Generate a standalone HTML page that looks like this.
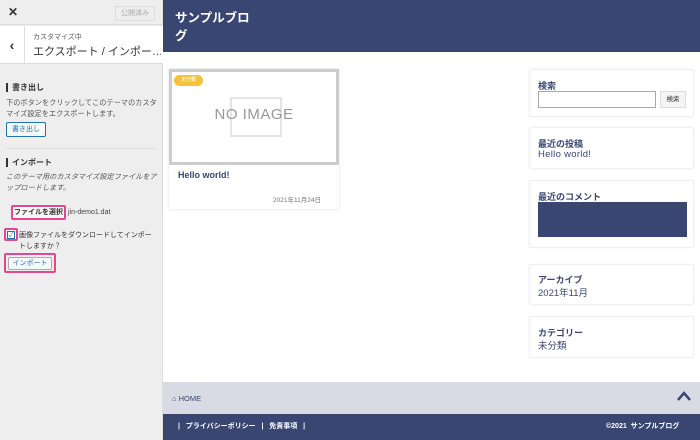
<!DOCTYPE html>
<html><head><meta charset="utf-8"><style>
*{box-sizing:border-box;margin:0;padding:0}
body{width:700px;height:440px;overflow:hidden;position:relative;font-family:"Liberation Sans","Noto Sans CJK JP",sans-serif;background:#fff;color:#333}
.a{position:absolute}
.side{left:0;top:0;width:163px;height:440px;background:#eeeeee;border-right:1px solid #ddd}
.wg{background:#fff;border:1px solid #f0f0f0;border-radius:2px;box-shadow:0 0 2px rgba(0,0,0,.05);left:529px;width:165px}
.wt{font-size:9px;font-weight:bold;color:#3a4672;position:absolute;left:8px;white-space:nowrap}
.pk{border:2px solid #e0488f;border-radius:2px}
</style></head><body>
<div class="a side">
 <div class="a" style="left:0;top:0;width:163px;height:25px;border-bottom:1px solid #ddd"></div>
 <div class="a" style="left:8px;top:5px;font-size:12px;font-weight:bold">✕</div>
 <div class="a" style="left:115px;top:6px;width:40px;height:15px;border:1px solid #ddd;font-size:7px;color:#aaa;text-align:center;line-height:13px">公開済み</div>
 <div class="a" style="left:0;top:26px;width:163px;height:38px;background:#fff;border-bottom:1px solid #ddd"></div>
 <div class="a" style="left:0;top:26px;width:25px;height:38px;border-right:1px solid #ddd;font-size:14px;font-weight:bold;text-align:center;line-height:38px">‹</div>
 <div class="a" style="left:33px;top:32px;font-size:7px;color:#555">カスタマイズ中</div>
 <div class="a" style="left:33px;top:43px;font-size:11px;color:#333;white-space:nowrap;width:128px;overflow:hidden">エクスポート / インポー…</div>
 <div class="a" style="left:6px;top:83px;border-left:2px solid #333;padding-left:4px;font-size:8px;font-weight:bold;line-height:9px">書き出し</div>
 <div class="a" style="left:6px;top:97px;font-size:7.2px;color:#555;line-height:11px;width:152px">下のボタンをクリックしてこのテーマのカスタマイズ設定をエクスポートします。</div>
 <div class="a" style="left:6px;top:122px;width:40px;height:15px;border:1px solid #2271b1;border-radius:2px;background:#f6f7f7;font-size:7px;color:#2271b1;text-align:center;line-height:13px">書き出し</div>
 <div class="a" style="left:6px;top:148px;width:150px;border-top:1px solid #ddd"></div>
 <div class="a" style="left:6px;top:158px;border-left:2px solid #333;padding-left:4px;font-size:8px;font-weight:bold;line-height:9px">インポート</div>
 <div class="a" style="left:6px;top:171px;font-size:7.2px;color:#555;line-height:11px;width:152px;font-style:italic">このテーマ用のカスタマイズ設定ファイルをアップロードします。</div>
 <div class="a pk" style="left:11px;top:205px;width:55px;height:15px;background:#f6f6f6;font-size:7px;font-weight:bold;text-align:center;line-height:11px">ファイルを選択</div>
 <div class="a" style="left:68px;top:209px;font-size:7px;color:#444">jin-demo1.dat</div>
 <div class="a pk" style="left:4px;top:228px;width:14px;height:13px;background:#fff"><div style="margin:1px;width:8px;height:8px;border:1px solid #2271b1;font-size:7px;line-height:7px;color:#2271b1;text-align:center">✓</div></div>
 <div class="a" style="left:19px;top:230px;font-size:7px;color:#333;width:138px;line-height:11px">画像ファイルをダウンロードしてインポートしますか？</div>
 <div class="a pk" style="left:4px;top:253px;width:52px;height:20px;padding:2px"><div style="width:44px;height:13px;border:1px solid #aaa;border-radius:2px;background:#f6f7f7;font-size:7px;color:#2271b1;text-align:center;line-height:11px">インポート</div></div>
</div>
<div class="a" style="left:163px;top:0;width:537px;height:52px;background:#3a4672"></div>
<div class="a" style="left:175px;top:9px;font-size:12.5px;font-weight:bold;color:#fff;line-height:18px;width:80px">サンプルブログ</div>
<div class="a" style="left:169px;top:69px;width:170px;height:140px;background:#fff;box-shadow:0 0 3px rgba(0,0,0,.12)"></div>
<div class="a" style="left:169px;top:69px;width:170px;height:96px;border:3px solid #ccc;background:#fff"></div>
<div class="a" style="left:230px;top:97px;width:52px;height:40px;border:2px solid #e4e4e4"></div>
<div class="a" style="left:169px;top:106px;width:170px;text-align:center;font-size:15px;color:#999;letter-spacing:0.5px">NO IMAGE</div>
<div class="a" style="left:174px;top:75px;width:29px;height:11px;border-radius:6px;background:#f5c33b;font-size:5px;color:#fff;text-align:center;line-height:11px">未分類</div>
<div class="a" style="left:178px;top:170px;font-size:9px;font-weight:bold;color:#3a4672">Hello world!</div>
<div class="a" style="left:273px;top:194px;font-size:6.5px;color:#777">2021年11月24日</div>
<div class="a wg" style="top:69px;height:48px"><div class="wt" style="top:9px">検索</div>
 <div class="a" style="left:8px;top:21px;width:118px;height:17px;border:1px solid #aaa"></div>
 <div class="a" style="left:130px;top:21px;width:26px;height:17px;border:1px solid #ddd;background:#f5f5f5;font-size:6.5px;text-align:center;line-height:15px">検索</div></div>
<div class="a wg" style="top:127px;height:42px"><div class="wt" style="top:9px">最近の投稿</div><div class="wt" style="top:21px;font-size:9.5px;font-weight:normal;letter-spacing:.3px">Hello world!</div></div>
<div class="a wg" style="top:180px;height:68px"><div class="wt" style="top:9px">最近のコメント</div><div class="a" style="left:8px;top:21px;width:149px;height:35px;background:#3a4672"></div></div>
<div class="a wg" style="top:264px;height:41px"><div class="wt" style="top:8px">アーカイブ</div><div class="wt" style="top:20px;font-size:9.5px;font-weight:normal">2021年11月</div></div>
<div class="a wg" style="top:316px;height:42px"><div class="wt" style="top:9px">カテゴリー</div><div class="wt" style="top:21px;font-size:9.5px;font-weight:normal">未分類</div></div>
<div class="a" style="left:163px;top:382px;width:537px;height:32px;background:#d8dbe3"></div>
<div class="a" style="left:172px;top:394px;font-size:7.5px;color:#3a4672">⌂ HOME</div>
<svg class="a" style="left:676px;top:390px" width="16" height="12"><path d="M2 10 L8 3 L14 10" stroke="#3a4672" stroke-width="2.5" fill="none"/></svg>
<div class="a" style="left:163px;top:414px;width:537px;height:26px;background:#3a4672"></div>
<div class="a" style="left:178px;top:421px;font-size:7px;font-weight:bold;color:#fff;white-space:pre">|   プライバシーポリシー   |   免責事項   |</div>
<div class="a" style="left:606px;top:421px;font-size:7px;font-weight:bold;color:#fff;white-space:pre">©2021  サンプルブログ</div>
</body></html>
